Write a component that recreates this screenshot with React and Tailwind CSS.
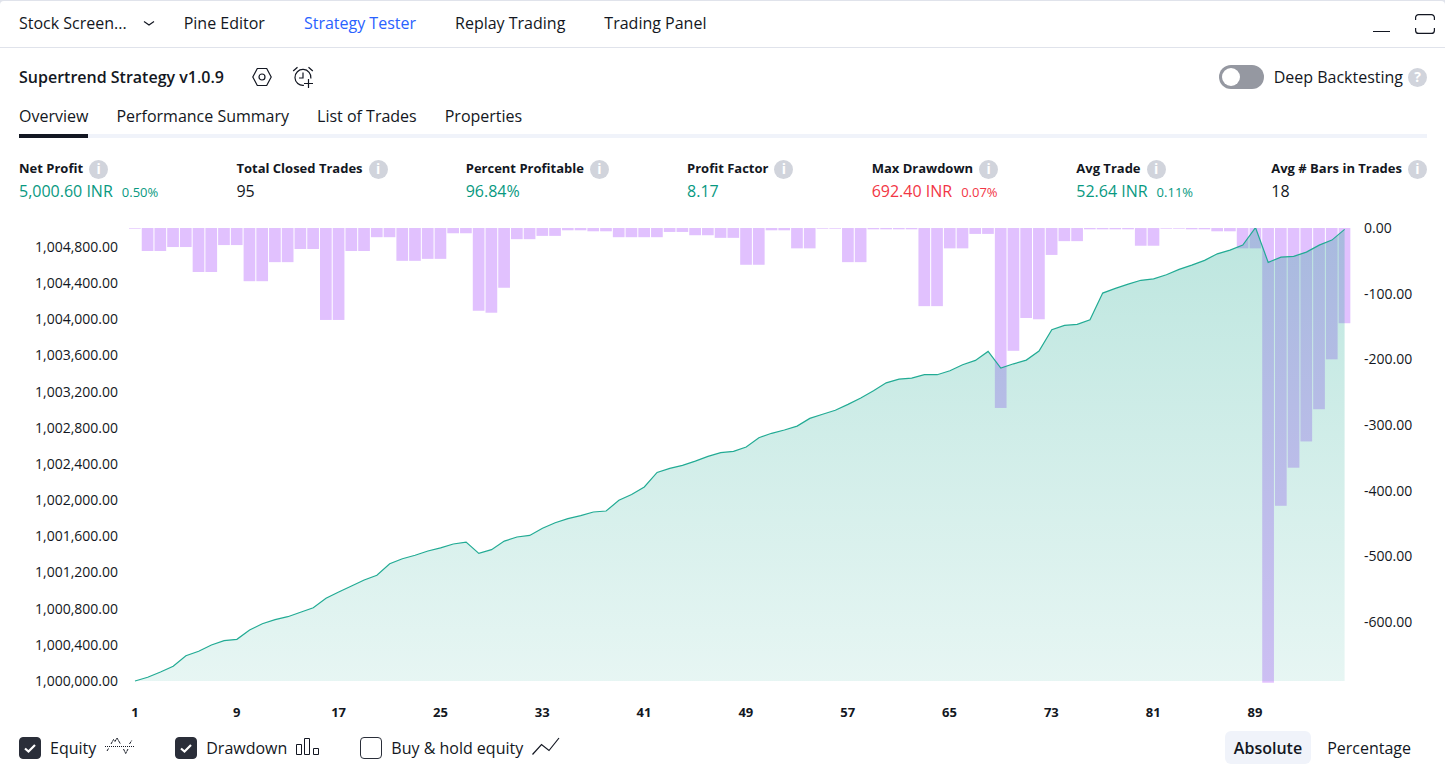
import { useState } from "react";
import clsx from "clsx";

const PANELS = ["Pine Editor", "Strategy Tester", "Replay Trading", "Trading Panel"];
const REPORT_TABS = ["Overview", "Performance Summary", "List of Trades", "Properties"];
const MODES = ["Absolute", "Percentage"];

const METRICS = [
  { label: "Net Profit", value: "5,000.60 INR", percent: "0.50%", tone: "up" },
  { label: "Total Closed Trades", value: "95" },
  { label: "Percent Profitable", value: "96.84%", tone: "up" },
  { label: "Profit Factor", value: "8.17", tone: "up" },
  { label: "Max Drawdown", value: "692.40 INR", percent: "0.07%", tone: "down" },
  { label: "Avg Trade", value: "52.64 INR", percent: "0.11%", tone: "up" },
  { label: "Avg # Bars in Trades", value: "18" },
];

// cumulative profit after each trade, on top of the 1,000,000 starting capital
const EQUITY = [
  0, 41, 100, 163, 280, 328, 398, 446, 461, 564, 634, 678, 711, 760, 811, 915,
  984, 1051, 1117, 1169, 1297, 1353, 1390, 1438, 1474, 1515, 1537, 1412, 1452, 1548, 1593, 1611,
  1689, 1751, 1795, 1828, 1869, 1880, 1999, 2063, 2146, 2308, 2352, 2386, 2433, 2485, 2525, 2540,
  2588, 2691, 2740, 2776, 2820, 2905, 2950, 2994, 3060, 3130, 3211, 3299, 3340, 3351, 3388, 3388,
  3432, 3498, 3547, 3646, 3462, 3509, 3550, 3650, 3885, 3934, 3945, 3996, 4291, 4343, 4391, 4432,
  4449, 4494, 4553, 4601, 4653, 4726, 4767, 4822, 5016, 4631, 4689, 4697, 4745, 4822, 4877, 4996,
];

const DRAWDOWN = [
  1, 35, 35, 29, 29, 67, 67, 26, 26, 81, 81, 52, 52, 32, 32, 140,
  140, 35, 35, 14, 14, 50, 50, 47, 47, 8, 8, 126, 129, 91, 17, 17,
  12, 12, 3.5, 3.5, 5, 5, 14, 14, 14, 14, 6, 6, 11, 11, 15, 15,
  56, 56, 3.5, 3.5, 31, 31, 1, 1, 52, 52, 2, 2, 2, 2, 119, 119,
  31, 31, 9, 9, 274, 187, 137, 139, 41, 20, 20, 2, 2, 2, 2, 27,
  27, 1, 1, 2, 2, 5, 5, 31, 31, 692.4, 423, 365, 325, 276, 200, 145,
];

const EQUITY_TICKS = Array.from({ length: 13 }, (_, i) => 1004800 - i * 400);
const DRAWDOWN_TICKS = [0, -100, -200, -300, -400, -500, -600];
const TRADE_TICKS = Array.from({ length: 12 }, (_, i) => 1 + i * 8);

// plot area, in viewBox units
const PLOT_W = 1222;
const PLOT_H = 455;
const BASELINE = 453;
const STEP = 12.733;
const tradeX = (i) => 6 + i * STEP;
const equityY = (v) => BASELINE - v * 0.0904;
const drawdownH = (v) => v * 0.6567;

const linePoints = EQUITY.map((v, i) => `${tradeX(i).toFixed(1)},${equityY(v).toFixed(1)}`).join(" ");
const areaPoints = `${tradeX(0)},${BASELINE} ${linePoints} ${tradeX(EQUITY.length - 1).toFixed(1)},${BASELINE}`;

const money = (v) => v.toLocaleString("en-US", { minimumFractionDigits: 2 });

function ChevronIcon() {
  return (
    <svg width="12" height="8" viewBox="0 0 12 8" fill="none" stroke="currentColor" strokeWidth="1.2">
      <path d="M1 2.500 6 6l5-3.500" />
    </svg>
  );
}

function SettingsIcon() {
  return (
    <svg width="20" height="20" viewBox="0 0 20 20" fill="none" stroke="currentColor" strokeWidth="1.2">
      <path d="M5.300 1.500h9.400L19.200 10l-4.500 8.500H5.300L.8 10z" />
      <circle cx="10" cy="10" r="3" />
    </svg>
  );
}

function AlarmAddIcon() {
  return (
    <svg width="22" height="22" viewBox="0 0 22 22" fill="none" stroke="currentColor" strokeWidth="1.2">
      <path d="M18.900 12.500a8 8 0 1 0-7 6.900" />
      <path d="M11 6.500V12H7M1.200 5 5.500 1.200M16.500 1.200 20.800 5M16.500 13v9M12 17.500h9" />
    </svg>
  );
}

function MaximizeIcon() {
  return (
    <svg width="20" height="20" viewBox="0 0 20 20" fill="none" stroke="currentColor" strokeWidth="1.200">
      <path d="M.6 6V3.600a3 3 0 0 1 3-3h12.800a3 3 0 0 1 3 3V6M.6 14v2.400a3 3 0 0 0 3 3h12.800a3 3 0 0 0 3-3V14" />
    </svg>
  );
}

function EquityIcon() {
  return (
    <svg width="30" height="22" viewBox="0 0 30 22" fill="none" stroke="currentColor">
      <path d="M0 9.500h30" strokeDasharray="1 1" />
      <path d="M2 14l1.500-2.500M6 7 8.500 2.500l1.500 2L12 1l3.500 6M18.500 12l2.200 4.500L23 12M24.500 7l2.200-3.500" strokeDasharray="3 .6" />
    </svg>
  );
}

function DrawdownIcon() {
  return (
    <svg width="24" height="22" viewBox="0 0 24 22" fill="none" stroke="currentColor">
      <path d="M.5 7.500h5v10h-5zM8.500 1.500h5v16h-5zM17.500 11.500h5v6h-5z" />
    </svg>
  );
}

function TrendIcon() {
  return (
    <svg width="28" height="22" viewBox="0 0 28 22" fill="none" stroke="currentColor" strokeWidth="1.200">
      <path d="M.5 17.500 9.500 7.500l7.500 6L27 1" />
    </svg>
  );
}

function Badge({ children, label }) {
  return (
    <button
      type="button"
      aria-label={label}
      className="grid h-[19px] w-[19px] shrink-0 place-items-center rounded-full bg-[#d1d4dc] text-[14px] leading-none font-bold text-white"
    >
      {children}
    </button>
  );
}

function Metric({ label, value, percent, tone }) {
  return (
    <div>
      <dt className="flex h-5 items-center gap-[6px] text-[13px] font-bold">
        {label}
        <Badge label={`About ${label}`}>i</Badge>
      </dt>
      <dd
        className={clsx(
          "flex h-6 items-baseline gap-[9px] leading-6",
          tone === "up" && "text-[#089981]",
          tone === "down" && "text-[#f23645]"
        )}
      >
        {value}
        {percent && <span className="text-[13px]">{percent}</span>}
      </dd>
    </div>
  );
}

function SeriesToggle({ label, checked, onChange, icon }) {
  return (
    <label className="flex items-center gap-[9px]">
      <span className="grid h-[22px] w-[22px]">
        <input
          type="checkbox"
          checked={checked}
          onChange={onChange}
          className="h-[22px] w-[22px] appearance-none rounded border border-[#2a2e39] bg-white [grid-area:1/1] checked:bg-[#2a2e39]"
        />
        {checked && (
          <svg viewBox="0 0 22 22" fill="none" stroke="#fff" strokeWidth="2.200" className="pointer-events-none [grid-area:1/1]">
            <path d="M6 11.500 9.500 14.500 16 8" />
          </svg>
        )}
      </span>
      {label}
      {icon}
    </label>
  );
}

function Chart({ equity, drawdown }) {
  return (
    <div>
      <div className="flex text-[14px] text-[#131722]">
        <div className="flex h-[473px] w-[118px] flex-col justify-between pt-[19px] text-right">
          {EQUITY_TICKS.map((t) => (
            <span key={t} className="leading-5">{money(t)}</span>
          ))}
        </div>
        <svg
          viewBox={`0 0 ${PLOT_W} ${PLOT_H}`}
          preserveAspectRatio="none"
          className="mt-[10px] ml-[11px] h-[455px] min-w-0 flex-1"
          role="img"
          aria-label="Equity and drawdown by trade"
        >
          <defs>
            <linearGradient id="equityFill" gradientUnits="userSpaceOnUse" x1="0" y1="0" x2="0" y2={BASELINE}>
              <stop offset="0" stopColor="#22ab94" stopOpacity="0.3" />
              <stop offset="1" stopColor="#22ab94" stopOpacity="0.110" />
            </linearGradient>
          </defs>
          {drawdown &&
            DRAWDOWN.map((v, i) => (
              <rect key={i} x={tradeX(i) - 6} y="0" width="11.700" height={drawdownH(v)} fill="#e1c1fe" />
            ))}
          {equity && (
            <>
              <polygon points={areaPoints} fill="url(#equityFill)" />
              <polyline
                points={linePoints}
                fill="none"
                stroke="#22ab94"
                strokeWidth="1.200"
                vectorEffect="non-scaling-stroke"
              />
            </>
          )}
        </svg>
        <div className="flex h-[414px] w-[94px] flex-col justify-between pl-[13px]">
          {DRAWDOWN_TICKS.map((t) => (
            <span key={t} className="leading-5">{money(t)}</span>
          ))}
        </div>
      </div>
      <div className="flex pt-[11px] pr-[139px] pl-[84px] text-[13px] font-bold text-[#131722]">
        {TRADE_TICKS.map((t) => (
          <span key={t} className="flex-1 text-center leading-5">{t}</span>
        ))}
      </div>
    </div>
  );
}

export default function App() {
  const [panel, setPanel] = useState("Strategy Tester");
  const [tab, setTab] = useState("Overview");
  const [mode, setMode] = useState("Absolute");
  const [deep, setDeep] = useState(false);
  const [series, setSeries] = useState({ equity: true, drawdown: true, hold: false });

  const flip = (key) => () => setSeries((s) => ({ ...s, [key]: !s[key] }));

  return (
    <div className="bg-[#e0e3eb] pt-px font-['Open_Sans',sans-serif] text-[16px] text-[#131722]">
      <div className="rounded-t bg-white">
        <header className="flex h-[47px] items-center border-b border-[#e0e3eb] pr-[10px] pl-[19px]">
          <nav className="flex items-center gap-[29px] pb-[2px]">
            <div className="flex items-center gap-4">
              <button type="button">Stock Screen...</button>
              <button type="button" aria-label="More screeners">
                <ChevronIcon />
              </button>
            </div>
            <div className="flex gap-[39px]">
              {PANELS.map((p) => (
                <button key={p} type="button" onClick={() => setPanel(p)} className={clsx(p === panel && "text-[#2962ff]")}>
                  {p}
                </button>
              ))}
            </div>
          </nav>
          <div className="ml-auto flex items-center gap-[25px]">
            <button type="button" aria-label="Minimize" className="flex h-5 w-[17px] items-end pb-[2px]">
              <span className="h-px w-full bg-[#131722]" />
            </button>
            <button type="button" aria-label="Maximize">
              <MaximizeIcon />
            </button>
          </div>
        </header>

        <section className="flex h-[58px] items-center pr-[18px] pl-[19px]">
          <h1 className="font-semibold">Supertrend Strategy v1.0.9</h1>
          <div className="ml-7 flex items-center gap-5">
            <button type="button" aria-label="Settings">
              <SettingsIcon />
            </button>
            <button type="button" aria-label="Add alert">
              <AlarmAddIcon />
            </button>
          </div>
          <div className="ml-auto flex items-center gap-[5px]">
            <label className="flex items-center gap-[10px]">
              <input
                type="checkbox"
                role="switch"
                checked={deep}
                onChange={() => setDeep(!deep)}
                className="flex h-6 w-[45px] appearance-none items-center rounded-full bg-[#9598a1] px-[3px] before:h-[18px] before:w-[18px] before:rounded-full before:bg-white checked:justify-end checked:bg-[#131722]"
              />
              Deep Backtesting
            </label>
            <Badge label="About deep backtesting">?</Badge>
          </div>
        </section>

        <nav className="mr-[18px] ml-[19px] flex h-8 gap-[28px] border-b-4 border-[#f0f3fa]">
          {REPORT_TABS.map((t) => (
            <button
              key={t}
              type="button"
              onClick={() => setTab(t)}
              className={clsx(
                "-mb-1 flex h-8 items-start border-b-4 leading-5",
                t === tab ? "border-[#131722]" : "border-transparent"
              )}
            >
              {t}
            </button>
          ))}
        </nav>

        <dl className="flex justify-between pt-[21px] pr-[18px] pl-[19px]">
          {METRICS.map((m) => (
            <Metric key={m.label} {...m} />
          ))}
        </dl>

        <div className="pt-[15px]">
          <Chart equity={series.equity} drawdown={series.drawdown} />
        </div>

        <footer className="flex items-center justify-between pt-[9px] pr-[18px] pb-1 pl-[19px]">
          <div className="flex items-center gap-[40px]">
            <SeriesToggle label="Equity" checked={series.equity} onChange={flip("equity")} icon={<EquityIcon />} />
            <SeriesToggle label="Drawdown" checked={series.drawdown} onChange={flip("drawdown")} icon={<DrawdownIcon />} />
            <SeriesToggle label="Buy & hold equity" checked={series.hold} onChange={flip("hold")} icon={<TrendIcon />} />
          </div>
          <div className="flex">
            {MODES.map((m) => (
              <button
                key={m}
                type="button"
                onClick={() => setMode(m)}
                className={clsx(
                  "h-[33px] rounded-md",
                  m === mode ? "bg-[#f0f3fa] px-[9px] font-semibold" : "px-4"
                )}
              >
                {m}
              </button>
            ))}
          </div>
        </footer>
      </div>
    </div>
  );
}
